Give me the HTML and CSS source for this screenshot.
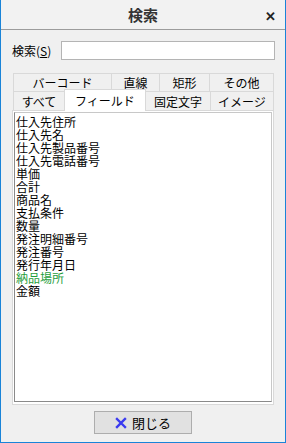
FILE: index.html
```html
<!DOCTYPE html>
<html lang="ja">
<head>
    <meta charset="UTF-8">
    <title>検索</title>
    <link rel="stylesheet" href="styles.css">
</head>
<body>
    <div class="window">
        <div class="titlebar">
            <span class="title">検索</span>
            <span class="close">&#x2715;</span>
        </div>

        <div class="search-row">
            <label for="q">検索(<u>S</u>)</label>
            <input type="text" id="q">
        </div>

        <div class="tabs">
            <div class="tab-row">
                <div class="tab w98">バーコード</div>
                <div class="tab w47">直線</div>
                <div class="tab w49">矩形</div>
                <div class="tab w63">その他</div>
            </div>
            <div class="tab-row front">
                <div class="tab w51">すべて</div>
                <div class="tab w80 active">フィールド</div>
                <div class="tab w64">固定文字</div>
                <div class="tab w62">イメージ</div>
            </div>
        </div>

        <div class="panel">
            <ul class="list">
                <li>仕入先住所</li>
                <li>仕入先名</li>
                <li>仕入先製品番号</li>
                <li>仕入先電話番号</li>
                <li>単価</li>
                <li>合計</li>
                <li>商品名</li>
                <li>支払条件</li>
                <li>数量</li>
                <li>発注明細番号</li>
                <li>発注番号</li>
                <li>発行年月日</li>
                <li class="green">納品場所</li>
                <li>金額</li>
            </ul>
        </div>

        <div class="footer">
            <button class="btn-close">
                <svg width="12" height="12" viewBox="0 0 12 12">
                    <path d="M2 2 L10 10 M10 2 L2 10" stroke="#3b3bf0" stroke-width="2.4" stroke-linecap="square"/>
                </svg>
                閉じる
            </button>
        </div>
    </div>
</body>
</html>
```

FILE: styles.css
```css
body {
    margin: 0;
    font-family: "Noto Sans CJK JP", "Noto Sans", sans-serif;
    font-size: 12px;
    color: #000;
}

.window {
    width: 284px;
    height: 442px;
    border: 1px solid #1a84d8;
    border-top: none;
    background-color: #f0f0f0;
}

.titlebar {
    height: 29px;
    background-color: #f2f2f2;
    border-bottom: 1px solid #9c9c9c;
    display: flex;
    align-items: center;
    justify-content: center;
    position: relative;
}

.title {
    font-size: 15px;
    font-weight: bold;
    color: #333;
}

.close {
    position: absolute;
    right: 9px;
    top: 6px;
    font-size: 13px;
    font-weight: bold;
    color: #222;
}

.search-row {
    display: flex;
    align-items: center;
    margin-top: 11px;
    padding-left: 11px;
    height: 19px;
}

.search-row label {
    width: 49px;
    font-size: 12px;
}

.search-row input {
    width: 212px;
    height: 17px;
    padding: 0;
    border: 1px solid #b4b4b4;
    background-color: #fff;
}

.tabs {
    margin-top: 13px;
    padding-left: 12px;
}

.tab-row {
    display: flex;
    height: 18px;
}

.tab-row.front {
    height: 19px;
    align-items: flex-end;
}

.tab {
    height: 17px;
    border: 1px solid #d9d9d9;
    border-bottom: none;
    margin-left: -1px;
    display: flex;
    align-items: center;
    justify-content: center;
    background-color: #f0f0f0;
    font-size: 12px;
}

.tab-row .tab:first-child {
    margin-left: 0;
}

.tab-row.front .tab {
    height: 18px;
}

.tab.active {
    height: 21px !important;
    margin-bottom: -1px;
    background-color: #fff;
    position: relative;
    z-index: 1;
}

.w98 { width: 97px; }
.w47 { width: 47px; }
.w49 { width: 49px; }
.w63 { width: 63px; }
.w51 { width: 50px; }
.w80 { width: 80px; }
.w64 { width: 64px; }
.w62 { width: 62px; }

.panel {
    margin-left: 11px;
    width: 260px;
    height: 293px;
    border: 1px solid #d9d9d9;
    background-color: #fff;
}

.list {
    list-style: none;
    margin: 1px;
    padding: 2px 0 0 1px;
    height: 286px;
    border: 1px solid #8a8a8a;
    border-top-color: #c8c8c8;
    border-right-color: #c8c8c8;
}

.list li {
    height: 13px;
    line-height: 13px;
    font-size: 12px;
}

.list li.green {
    color: #1f9e3c;
}

.footer {
    display: flex;
    justify-content: center;
    margin-top: 6px;
}

.btn-close {
    width: 98px;
    height: 23px;
    border: 1px solid #adadad;
    background-color: #e1e1e1;
    font-family: "Noto Sans CJK JP", sans-serif;
    font-size: 13px;
    display: flex;
    align-items: center;
    justify-content: center;
    gap: 5px;
    padding: 0;
}
```
